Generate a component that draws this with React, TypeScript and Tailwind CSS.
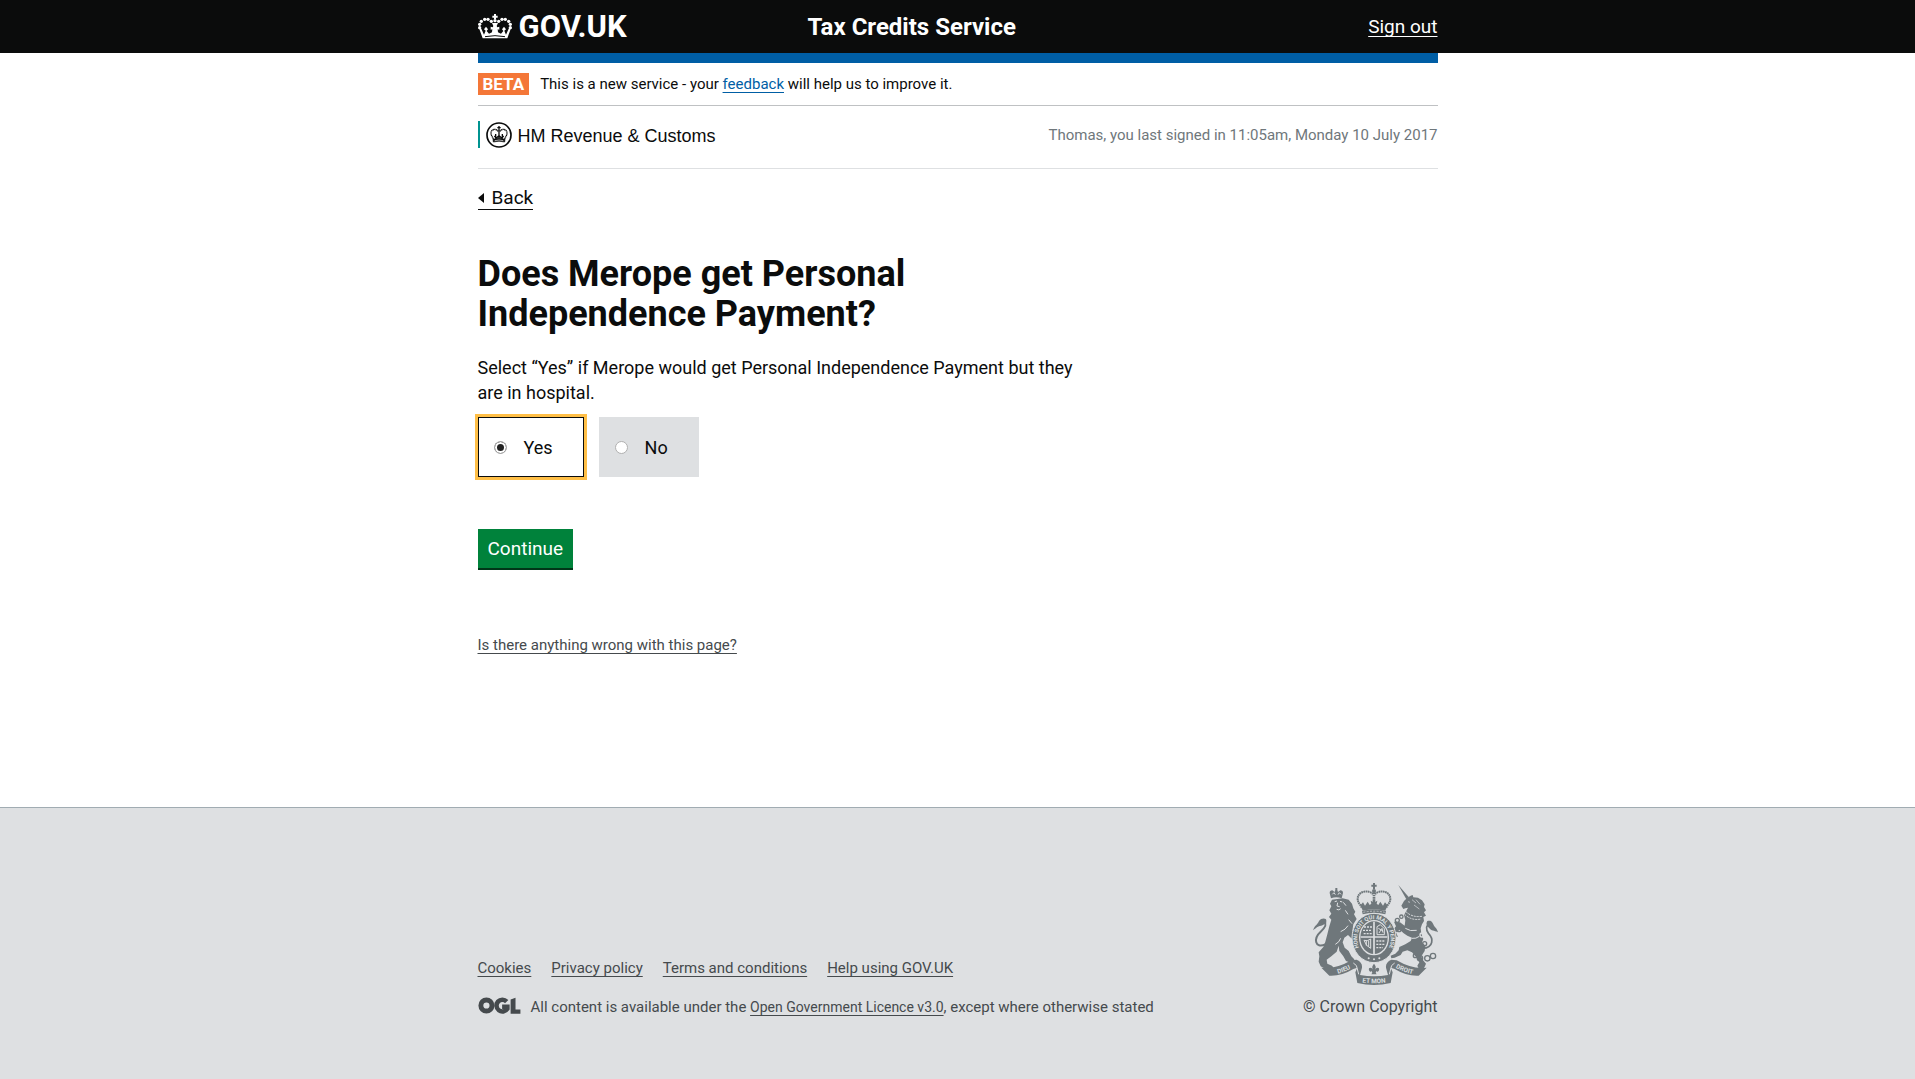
import React, { useState } from 'react';

const linkBase =
  'underline decoration-1 underline-offset-[3px] [text-decoration-skip-ink:none]';

function GovCrown() {
  return (
    <svg viewBox="0 0 102 75" className="h-[25px] w-[34px]" fill="#fff" aria-hidden="true">
      <path d="M48 0h6v5h5v6h-5v5h-6v-5h-5V5h5z" />
      <circle cx="51" cy="20" r="5" />
      <circle cx="40" cy="22" r="5" />
      <circle cx="30" cy="16" r="5" />
      <circle cx="20" cy="16" r="5" />
      <circle cx="10" cy="22" r="5" />
      <circle cx="5" cy="31" r="5" />
      <circle cx="5" cy="41" r="5" />
      <circle cx="62" cy="22" r="5" />
      <circle cx="72" cy="16" r="5" />
      <circle cx="82" cy="16" r="5" />
      <circle cx="92" cy="22" r="5" />
      <circle cx="97" cy="31" r="5" />
      <circle cx="97" cy="41" r="5" />
      <path d="M4 45l6-1 8 18 5-12-5-4 6-8 6 8-4 5 7 8 9-4 1-9-5 1v-9l6 2 2-4-4-9h18l-4 9 2 4 6-2v9l-5-1 1 9 9 4 7-8-4-5 6-8 6 8-5 4 5 12 8-18 6 1-10 28H14z" />
      <path d="M21 68q30-6 60 0" stroke="#0b0c0c" strokeWidth="3" fill="none" />
    </svg>
  );
}

function HmrcCrest() {
  return (
    <svg viewBox="0 0 78 78" className="h-[26px] w-[26px]" fill="none" stroke="#0b0c0c" aria-hidden="true">
      <circle cx="39" cy="39" r="36" strokeWidth="5" />
      <path d="M39 12v12M34 17h10" strokeWidth="4" />
      <path d="M37 28c-8-10-22-6-22 5 0 8 5 12 7 18M41 28c8-10 22-6 22 5 0 8-5 12-7 18" strokeWidth="4" strokeDasharray="4 1" />
      <path d="M39 24v24M29 36v14M49 36v14M25 42l6 6 8-7 8 7 6-6" strokeWidth="4" />
      <path d="M21 52q18-6 36 0l-1 8q-17-5-34 0z" fill="#0b0c0c" strokeWidth="2" />
      <path d="M26 56q13-4 26 0" stroke="#fff" strokeWidth="2" />
    </svg>
  );
}

function OglLogo() {
  return (
    <svg viewBox="0 0 128 52" className="h-[17px] w-[43px] shrink-0" fill="none" stroke="#454a4d" role="img" aria-label="OGL">
      <circle cx="24" cy="26" r="17" strokeWidth="15" />
      <path d="M86 14A18 18 0 1 0 88 36V30H72" strokeWidth="14" />
      <path d="M98 8l15-6v36h15v13H98z" fill="#454a4d" stroke="none" />
    </svg>
  );
}

function RoyalArms() {
  const g = '#6f777b';
  const bg = '#dee0e2';
  return (
    <svg viewBox="69 39 375 309" className="h-[103px] w-[125px]" fill={g} aria-hidden="true">
      {/* central crown */}
      <path d="M249 42h6v5h5v6h-5v7h-6v-7h-5v-6h5z" />
      <circle cx="252" cy="66" r="6" />
      <g fill="none" stroke={g}>
        <path d="M249 76C240 62 203 64 203 90c0 12 10 18 13 28M255 76c9-14 46-12 46 14 0 12-10 18-13 28" strokeWidth="6" strokeDasharray="5 1.5" />
        <path d="M252 70v34" strokeWidth="8" strokeDasharray="5 2" />
      </g>
      <path d="M212 108l7-8 6 10 8-12 6 10 5-4-2-9 6 3 4-8 4 8 6-3-2 9 5 4 6-10 8 12 6-10 7 8-6 17q-34-9-68 0z" />
      <path d="M216 126q36-10 72 0l-2 10q-34-9-68 0z" />
      <path d="M220 130q32-7 64 0" stroke={bg} strokeWidth="2" fill="none" strokeDasharray="6 4" />

      {/* lion */}
      <path d="M123 88l-4-16q0-8 8-8l7 5 2-6 0-6h6v6l2 6 7-5q8 0 8 8l-4 16q-16-6-32 0z" />
      <path d="M127 76l5-5 4 6M144 77l4-6 5 5" stroke={bg} strokeWidth="3" fill="none" />
      <path d="M126 92L158 88L176 92L186 104L190 118L196 128L192 136L200 150L190 166L187 186L196 196L192 212L184 208L174 198L163 206L158 220L164 236L176 246L184 262L192 270L196 280L184 282L168 276L160 262L148 246L146 230L140 248L124 262L110 272L112 284L126 290L132 298L124 303L106 300L92 292L86 278L88 262L86 250L100 234L106 218L112 196L118 172L124 152L117 144L124 134L118 124L124 112L120 104Z" />
      <path d="M134 98l7-2M150 97l7 2M143 101l-2 10 8 2M140 121q7 4 12-2M160 100l8 10M166 124l8 12M176 152l10 12M152 188q15-6 22-18M136 226q12-6 16-18" stroke={bg} strokeWidth="3" fill="none" />
      <path d="M106 226C74 240 70 208 92 188c14-12 20-22 10-36" fill="none" stroke={g} strokeWidth="6" />
      <path d="M69 184c6-18 12-14 18-28 6-10 24-10 22 0 0 8-8 12-16 14-10 2-12 4-24 14z" />

      {/* unicorn */}
      <path d="M325 48L356 84L349 91Z" />
      <path d="M334 110L342 96L352 86L362 80L368 78L370 85L384 86L396 94L404 106L402 114L408 124L402 130L408 140L400 144L402 156L396 166L392 178L394 194L400 210L396 220L406 230L404 246L394 262L398 272L408 284L402 298L388 302L382 290L388 280L378 264L366 250L352 244L338 248L332 258L314 266L304 268L302 260L316 254L326 244L328 234L346 226L362 216L366 206L352 200L340 192L330 182L318 190L324 204L312 200L308 184L318 172L312 158L330 160L344 170L346 154L342 138L350 124L354 116L346 118L340 120Z" />
      <path d="M354 98l6 2M366 92l12 10M378 92l12 14M372 108l16 12" stroke={bg} strokeWidth="2" fill="none" />
      <path d="M344 136Q364 156 394 150M348 128Q366 146 396 142" stroke={bg} strokeWidth="3" fill="none" strokeDasharray="6 3" />
      <path d="M346 178q14 10 34 6M366 208q12 2 22-6" stroke={bg} strokeWidth="3" fill="none" />
      <path d="M398 238c34-2 32-30 18-44-10-14-8-26 4-30" fill="none" stroke={g} strokeWidth="5" />
      <path d="M412 156c14-4 16 6 20 14 4 6 9 8 12 20-12-6-20-4-26-12-6-8-12-12-6-22z" />
      <g fill="none" stroke={g} strokeWidth="4">
        <circle cx="334" cy="143" r="5" />
        <circle cx="322" cy="154" r="6" />
        <circle cx="327" cy="182" r="6" />
        <circle cx="396" cy="198" r="6" stroke={bg} />
        <circle cx="404" cy="224" r="6" />
        <circle cx="376" cy="260" r="6" />
        <circle cx="390" cy="268" r="8" />
        <circle cx="412" cy="268" r="8" />
        <circle cx="429" cy="261" r="8" />
      </g>

      {/* garter and quartered shield */}
      <ellipse cx="252" cy="207" rx="66" ry="74" stroke={bg} strokeWidth="3" />
      <ellipse cx="252" cy="206" rx="45" ry="53" fill={bg} />
      <ellipse cx="252" cy="206" rx="41" ry="49" />
      <path id="garter" d="M216 252A50 60 0 1 1 288 252" fill="none" />
      <text fill={bg} fontSize="17" fontWeight="700" textAnchor="middle">
        <textPath href="#garter" startOffset="50%">HONI SOIT QUI MAL Y PENSE</textPath>
      </text>
      <g fill="none" stroke={bg}>
        <path d="M252 158v97M212 204h80" strokeWidth="5" />
        <path d="M222 174h24M219 184h26M221 194h24" strokeWidth="4" strokeDasharray="6 3" />
        <path d="M259 216h25M259 226h24M259 236h20" strokeWidth="4" strokeDasharray="6 3" />
        <path d="M261 197v-24l10-6 12 12v18zM267 192l9-14 3 13M265 178l14 8" strokeWidth="3" />
        <path d="M222 214q10 4 20-4v28q-14-6-20-24zM229 216v14M236 215v18" strokeWidth="3" />
      </g>
      <circle cx="236" cy="268" r="3" fill={bg} />
      <circle cx="252" cy="271" r="3" fill={bg} />
      <circle cx="268" cy="268" r="3" fill={bg} />

      {/* fleur and motto ribbon */}
      <path d="M252 284c-9 10-4 14-2 20-4-10-16-10-13 0 2 6 7 4 7 1l3 6-3 5h16l-3-5 3-6c0 3 5 5 7-1 3-10-9-10-13 0 2-6 7-10-2-20z" />
      <path d="M94 296Q136 302 184 274L200 272Q218 280 216 296L210 318Q252 326 294 318L288 296Q286 280 304 272L320 274Q368 302 410 296L386 320Q350 322 314 300L302 296L308 310L302 342Q252 354 202 342L196 310L202 296L190 300Q154 322 118 320Z" />
      <path d="M190 282Q202 288 202 300L206 316M314 282Q302 288 302 300L298 316" stroke={bg} strokeWidth="3" fill="none" />
      <path id="motto-left" d="M130 317Q164 311 194 291" fill="none" />
      <path id="motto-mid" d="M203 338Q252 347 301 338" fill="none" />
      <path id="motto-right" d="M308 291Q340 311 378 317" fill="none" />
      <g fill={bg} fontSize="19" fontWeight="700" textAnchor="middle">
        <text><textPath href="#motto-left" startOffset="50%">DIEU</textPath></text>
        <text><textPath href="#motto-mid" startOffset="50%">ET MON</textPath></text>
        <text><textPath href="#motto-right" startOffset="50%">DROIT</textPath></text>
      </g>
    </svg>
  );
}

function Choice({
  label,
  checked,
  onSelect,
}: {
  label: string;
  checked: boolean;
  onSelect: () => void;
}) {
  return (
    <label
      className={
        'flex h-[60px] cursor-pointer items-center gap-[17px] border pr-[30px] pl-[15px] text-[18px] ' +
        (checked
          ? 'border-[#0b0c0c] bg-white outline-3 outline-[#ffbf47]'
          : 'border-[#dee0e2] bg-[#dee0e2]')
      }
    >
      <input
        type="radio"
        name="pip"
        checked={checked}
        onChange={onSelect}
        className="h-[13px] w-[13px] appearance-none rounded-full border border-[#b0b0b0] bg-white outline-none checked:bg-[#222] checked:shadow-[inset_0_0_0_2px_#fff]"
      />
      {label}
    </label>
  );
}

export default function App() {
  const [answer, setAnswer] = useState('Yes');
  return (
    <div className="flex min-h-screen flex-col bg-white font-[Roboto,sans-serif] text-[#0b0c0c]">
      <header className="bg-[#0b0c0c] text-white">
        <div className="mx-auto flex h-[53px] max-w-[960px] items-center">
          <a href="#home" className="flex w-[330px] items-center gap-[7px] text-[31px] font-bold">
            <GovCrown />
            <span className="pt-0.5">GOV.UK</span>
          </a>
          <span className="text-[24px] font-bold">Tax Credits Service</span>
          <a href="#sign-out" className={`${linkBase} ml-auto pt-0.5 text-[19px]`}>
            Sign out
          </a>
        </div>
      </header>

      <main className="mx-auto w-full max-w-[960px] pb-[150px]">
        <div className="h-2.5 bg-[#005ea5]" />
        <div className="flex items-center gap-[11px] border-b border-[#bfc1c3] py-2.5 text-[15px] leading-[22px]">
          <strong className="bg-[#f47738] px-[5px] text-[17px] text-white">BETA</strong>
          <p>
            This is a new service - your{' '}
            <a href="#feedback" className={`${linkBase} text-[#005ea5]`}>
              feedback
            </a>{' '}
            will help us to improve it.
          </p>
        </div>

        <div className="flex items-center justify-between border-b border-[#dee0e2] pt-[15px] pb-5">
          <div className="flex h-[27px] items-end gap-[6px] border-l-2 border-[#009390] pl-[6px] font-['Liberation_Sans',sans-serif] text-[18px] leading-6">
            <HmrcCrest />
            <span>HM Revenue &amp; Customs</span>
          </div>
          <p className="text-[15px] leading-5 text-[#6f777b]">
            Thomas, you last signed in 11:05am, Monday 10 July 2017
          </p>
        </div>

        <a
          href="#back"
          className="mt-[17px] inline-flex items-center gap-2 border-b border-[#0b0c0c] text-[19px] leading-[23px]"
        >
          <svg viewBox="0 0 6 10" className="h-2.5 w-1.5" aria-hidden="true">
            <path d="M6 0v10L0 5z" fill="#0b0c0c" />
          </svg>
          Back
        </a>

        <form onSubmit={(e) => e.preventDefault()}>
          <fieldset>
            <legend className="max-w-[640px] pt-11">
              <h1 className="text-[36px] leading-10 font-bold">
                Does Merope get Personal Independence Payment?
              </h1>
            </legend>
            <p className="mt-[21px] max-w-[620px] text-[18px] leading-[25px]">
              Select “Yes” if Merope would get Personal Independence Payment but they are in
              hospital.
            </p>
            <div className="mt-3 flex gap-[15px]">
              {['Yes', 'No'].map((o) => (
                <Choice key={o} label={o} checked={answer === o} onSelect={() => setAnswer(o)} />
              ))}
            </div>
          </fieldset>
          <button
            type="submit"
            className="mt-[52px] block bg-[#00823b] px-2.5 py-[7px] text-[19px] leading-[25px] text-white shadow-[0_2px_0_#003618]"
          >
            Continue
          </button>
        </form>

        <a href="#report" className={`${linkBase} mt-[67px] inline-block text-[15px] leading-5 text-[#454a4d]`}>
          Is there anything wrong with this page?
        </a>
      </main>

      <footer className="flex-1 border-t border-[#a1acb2] bg-[#dee0e2] pb-[60px] text-[#454a4d]">
        <div className="mx-auto flex max-w-[960px] items-end justify-between pt-[74px]">
          <div className="text-[15px] leading-5">
            <ul className="mb-[19px] flex gap-5">
              {['Cookies', 'Privacy policy', 'Terms and conditions', 'Help using GOV.UK'].map((t) => (
                <li key={t}>
                  <a href="#footer" className={linkBase}>
                    {t}
                  </a>
                </li>
              ))}
            </ul>
            <div className="flex items-start gap-2.5">
              <OglLogo />
              <p>
                All content is available under the{' '}
                <a href="#ogl" className={`${linkBase} text-[14px]`}>
                  Open Government Licence v3.0
                </a>
                , except where otherwise stated
              </p>
            </div>
          </div>
          <a href="#crown" className="flex flex-col items-end gap-3 text-[16px] leading-5">
            <RoyalArms />
            <span>© Crown Copyright</span>
          </a>
        </div>
      </footer>
    </div>
  );
}
